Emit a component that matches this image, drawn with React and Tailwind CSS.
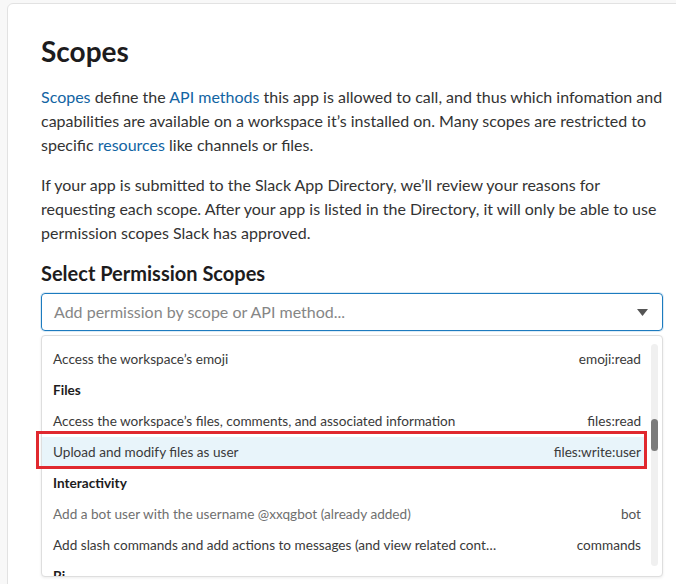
const rows = [
  { type: "item", label: "Access the workspace’s emoji", scope: "emoji:read" },
  { type: "group", label: "Files" },
  { type: "item", label: "Access the workspace’s files, comments, and associated information", scope: "files:read" },
  { type: "item", label: "Upload and modify files as user", scope: "files:write:user", active: true },
  { type: "group", label: "Interactivity" },
  { type: "item", label: "Add a bot user with the username @xxqgbot (already added)", scope: "bot", muted: true },
  { type: "item", label: "Add slash commands and add actions to messages (and view related cont…", scope: "commands" },
  { type: "group", label: "Bi" },
];

export default function App() {
  return (
    <div className="h-[584px] w-[676px] overflow-hidden bg-[#f8f8f8] pl-[7px] pt-[3px] font-['Lato','Liberation_Sans',sans-serif] text-[#1d1c1d]">
      <div className="h-[640px] w-[700px] rounded-l-md border border-[#e2e2e2] bg-white pl-[33px] pr-[45px] pt-[29px]">
        <div className="w-[622px]">
          <h1 className="text-[28px] font-bold leading-[36px]">Scopes</h1>

          <p className="mt-[16px] text-[16px] leading-[24px] text-[#333]">
            <a className="text-[#1264a3]">Scopes</a> define the{" "}
            <a className="text-[#1264a3]">API methods</a> this app is allowed to call, and thus which infomation and
            capabilities are available on a workspace it’s installed on. Many scopes are restricted to specific{" "}
            <a className="text-[#1264a3]">resources</a> like channels or files.
          </p>

          <p className="mt-[16px] text-[16px] leading-[24px] text-[#333]">
            If your app is submitted to the Slack App Directory, we’ll review your reasons for requesting each scope.
            After your app is listed in the Directory, it will only be able to use permission scopes Slack has approved.
          </p>

          <h2 className="mt-[16px] text-[20px] font-bold leading-[24px] text-[#1d1c1d]">Select Permission Scopes</h2>

          <div className="mt-[8px] flex h-[38px] items-center justify-between rounded-[4px] border border-[#1d7bbf] pl-[12px] pr-[14px] shadow-[0_0_0_1px_rgba(29,123,191,0.15)]">
            <span className="text-[16px] text-[#868686]">Add permission by scope or API method...</span>
            <svg width="11" height="7" viewBox="0 0 11 7">
              <path d="M0 0h11L5.5 7z" fill="#555" />
            </svg>
          </div>

          <div className="relative mt-[4px] h-[242px] overflow-hidden rounded-[4px] border border-[#dedede] bg-white shadow-[0_1px_3px_rgba(0,0,0,0.08)]">
            <div className="pt-[8px] pr-[17px]">
              {rows.map((r, i) =>
                r.type === "group" ? (
                  <div key={i} className="flex h-[31px] items-center pl-[11px] text-[13.6px] font-bold text-[#1d1c1d]">
                    {r.label}
                  </div>
                ) : (
                  <div
                    key={i}
                    className={
                      "flex h-[31px] items-center justify-between pl-[11px] pr-[4px] text-[13.6px] " +
                      (r.active ? "bg-[#e8f4fa] " : "") +
                      (r.muted ? "text-[#6f6f6f]" : "text-[#3a3a3a]")
                    }
                  >
                    <span>{r.label}</span>
                    <span className={r.muted ? "text-[#555]" : "text-[#3a3a3a]"}>{r.scope}</span>
                  </div>
                )
              )}
            </div>

            {/* scrollbar */}
            <div className="absolute right-[4px] top-[8px] h-[222px] w-[7px] rounded-full bg-[#f0f0f0]">
              <div className="mt-[75px] h-[32px] w-[7px] rounded-full bg-[#7b7b7b]" />
            </div>
          </div>
        </div>
      </div>

      {/* annotation */}
      <div className="absolute left-[36px] top-[431px] h-[38px] w-[611px] border-[3px] border-[#e0282e]" />
    </div>
  );
}
